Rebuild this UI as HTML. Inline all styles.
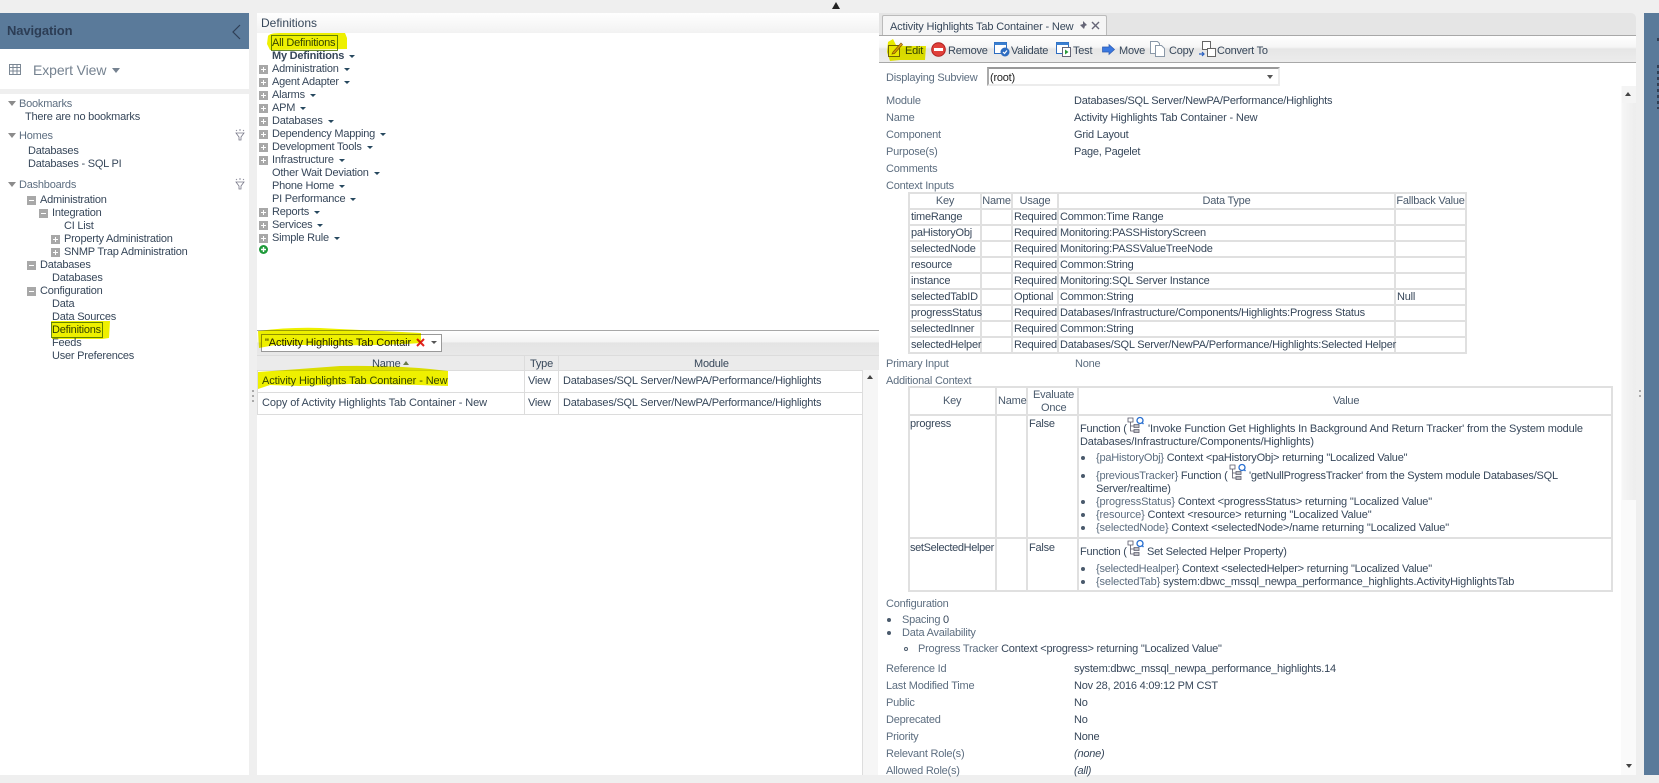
<!DOCTYPE html>
<html><head><meta charset="utf-8"><style>
html,body{margin:0;padding:0}
body{width:1659px;height:783px;position:relative;overflow:hidden;background:#efefef;font:11px "Liberation Sans",sans-serif;color:#37475a;letter-spacing:-.22px}
.r{position:absolute}
.t{position:absolute;white-space:nowrap;line-height:14px;height:14px;margin-top:1px}
.w .t{margin-top:0}
.s{letter-spacing:-.1px}
.m{letter-spacing:-.15px}
.l{color:#5d6e80}
.c{display:inline-block;width:0;height:0;border-left:3px solid transparent;border-right:3px solid transparent;border-top:3px solid #27485f;margin-left:5px;vertical-align:1px}
.b{position:absolute;width:9px;height:9px;background:#a8a8a8;margin-top:1px}
.b:before{content:"";position:absolute;left:2px;top:4px;width:5px;height:1px;background:#fff}
.p:after{content:"";position:absolute;left:4px;top:2px;width:1px;height:5px;background:#fff}
.tri{position:absolute;width:0;height:0;border-left:4px solid transparent;border-right:4px solid transparent;border-top:5px solid #8b8b8b;margin-top:1px}
table{position:absolute;border-collapse:collapse;table-layout:fixed;font:11px "Liberation Sans",sans-serif;color:#37475a}
td,th{border:2px solid #e0e0e0;padding:0 0 0 1px;white-space:nowrap;font-weight:normal;overflow:visible;line-height:13px}
th{color:#4a5a6c;text-align:center;padding:0}
.bu{position:absolute;width:4px;height:4px;border-radius:50%;background:#4a5a6c}
.k{color:#5d6e80}
svg{position:absolute;overflow:visible}
</style></head><body>

<!-- top arrow -->
<div class="r" style="left:832px;top:2px;width:0;height:0;border-left:4px solid transparent;border-right:4px solid transparent;border-bottom:7px solid #222"></div>

<!-- left panel -->
<div class="r" style="left:0;top:13px;width:249px;height:36px;background:#5a7a9a"></div>
<div class="t" style="left:7px;top:23px;font-size:13px;font-weight:bold;color:#2c3d55;letter-spacing:-.1px">Navigation</div>
<svg style="left:231px;top:24px" width="12" height="16"><path d="M9 1L2 8L9 15" fill="none" stroke="#2f3f55" stroke-width="1.2"/></svg>
<div class="r" style="left:0;top:49px;width:249px;height:40px;background:#fff"></div>
<svg style="left:9px;top:64px" width="12" height="11"><path d="M.5.5h11v10H.5zM.5 3.500h11M.5 7h11M4 .5v10M8 .5v10" fill="none" stroke="#7b8794"/></svg>
<div class="t" style="left:33px;top:62px;font-size:14px;line-height:15px;color:#758290;letter-spacing:-.1px">Expert View</div>
<div class="tri" style="left:112px;top:67px;border-top-color:#758290"></div>
<div class="r" style="left:0;top:94px;width:249px;height:681px;background:#fff"></div>

<div class="tri" style="left:8px;top:100px"></div><div class="t l" style="left:19px;top:96px">Bookmarks</div>
<div class="t" style="left:25px;top:109px">There are no bookmarks</div>
<div class="tri" style="left:8px;top:132px"></div><div class="t l" style="left:19px;top:128px">Homes</div>
<div class="t" style="left:28px;top:143px">Databases</div>
<div class="t" style="left:28px;top:156px">Databases - SQL PI</div>
<div class="tri" style="left:8px;top:181px"></div><div class="t l" style="left:19px;top:177px">Dashboards</div>
<svg style="left:235px;top:129px" width="10" height="12"><path d="M1 4h8L6 8v3H4V8zM1 1l1 1M5 0v2M9 1L8 2" fill="none" stroke="#778" stroke-width=".8"/></svg>
<svg style="left:235px;top:178px" width="10" height="12"><path d="M1 4h8L6 8v3H4V8zM1 1l1 1M5 0v2M9 1L8 2" fill="none" stroke="#778" stroke-width=".8"/></svg>
<div class="b" style="left:27px;top:195px"></div><div class="t" style="left:40px;top:192px">Administration</div>
<div class="b" style="left:39px;top:208px"></div><div class="t" style="left:52px;top:205px">Integration</div>
<div class="t" style="left:64px;top:218px">CI List</div>
<div class="b p" style="left:51px;top:234px"></div><div class="t" style="left:64px;top:231px">Property Administration</div>
<div class="b p" style="left:51px;top:247px"></div><div class="t" style="left:64px;top:244px">SNMP Trap Administration</div>
<div class="b" style="left:27px;top:260px"></div><div class="t" style="left:40px;top:257px">Databases</div>
<div class="t" style="left:52px;top:270px">Databases</div>
<div class="b" style="left:27px;top:286px"></div><div class="t" style="left:40px;top:283px">Configuration</div>
<div class="t" style="left:52px;top:296px">Data</div>
<div class="t" style="left:52px;top:309px">Data Sources</div>
<div class="r" style="left:51px;top:322px;width:50px;height:14px;border:1px solid #6a8a30"></div>
<div class="t" style="left:52px;top:322px">Definitions</div>
<div class="t" style="left:52px;top:335px">Feeds</div>
<div class="t" style="left:52px;top:348px">User Preferences</div>

<!-- middle panel -->
<div class="r" style="left:257px;top:13px;width:622px;height:20px;background:linear-gradient(#fff,#f2f2f2)"></div>
<div class="t" style="left:261px;top:15px;font-size:12px;letter-spacing:0">Definitions</div>
<div class="r" style="left:257px;top:33px;width:622px;height:742px;background:#fff"></div>

<div class="r" style="left:271px;top:35px;width:65px;height:14px;border:1px solid #6a8a30"></div>
<div class="t" style="left:272px;top:35px">All Definitions</div>
<div class="t" style="left:272px;top:48px;font-weight:bold">My Definitions<i class="c"></i></div>
<div class="b p" style="left:259px;top:64px"></div><div class="t" style="left:272px;top:61px">Administration<i class="c"></i></div>
<div class="b p" style="left:259px;top:77px"></div><div class="t" style="left:272px;top:74px">Agent Adapter<i class="c"></i></div>
<div class="b p" style="left:259px;top:90px"></div><div class="t" style="left:272px;top:87px">Alarms<i class="c"></i></div>
<div class="b p" style="left:259px;top:103px"></div><div class="t" style="left:272px;top:100px">APM<i class="c"></i></div>
<div class="b p" style="left:259px;top:116px"></div><div class="t" style="left:272px;top:113px">Databases<i class="c"></i></div>
<div class="b p" style="left:259px;top:129px"></div><div class="t" style="left:272px;top:126px">Dependency Mapping<i class="c"></i></div>
<div class="b p" style="left:259px;top:142px"></div><div class="t" style="left:272px;top:139px">Development Tools<i class="c"></i></div>
<div class="b p" style="left:259px;top:155px"></div><div class="t" style="left:272px;top:152px">Infrastructure<i class="c"></i></div>
<div class="t" style="left:272px;top:165px">Other Wait Deviation<i class="c"></i></div>
<div class="t" style="left:272px;top:178px">Phone Home<i class="c"></i></div>
<div class="t" style="left:272px;top:191px">PI Performance<i class="c"></i></div>
<div class="b p" style="left:259px;top:207px"></div><div class="t" style="left:272px;top:204px">Reports<i class="c"></i></div>
<div class="b p" style="left:259px;top:220px"></div><div class="t" style="left:272px;top:217px">Services<i class="c"></i></div>
<div class="b p" style="left:259px;top:233px"></div><div class="t" style="left:272px;top:230px">Simple Rule<i class="c"></i></div>
<svg style="left:259px;top:245px" width="9" height="9"><circle cx="4.5" cy="4.5" r="4.5" fill="#1f9a3a"/><path d="M4.5 2v5M2 4.5h5" stroke="#fff" stroke-width="1.4"/></svg>

<div class="r" style="left:257px;top:330px;width:622px;height:1px;background:#a8a8a8"></div>
<div class="r" style="left:257px;top:331px;width:622px;height:24px;background:linear-gradient(#fff 0,#f4f4f4 45%,#e4e4e4 50%,#e8e8e8 100%)"></div>
<div class="r" style="left:261px;top:334px;width:179px;height:16px;background:#fff;border:1px solid #999"></div>
<div class="t s" style="left:265px;top:335px;color:#222">"Activity Highlights Tab Contair</div>
<svg style="left:416px;top:338px" width="9" height="9"><path d="M1 1L8 8M8 1L1 8" stroke="#e0231c" stroke-width="2"/></svg>
<div class="r" style="left:431px;top:341px;width:0;height:0;border-left:3px solid transparent;border-right:3px solid transparent;border-top:3px solid #555"></div>

<div class="r" style="left:257px;top:355px;width:622px;height:15px;background:#ebebeb;border-top:1px solid #dcdcdc;box-sizing:border-box"></div>
<div class="r" style="left:524px;top:355px;width:1px;height:60px;background:#dcdcdc"></div>
<div class="r" style="left:558px;top:355px;width:1px;height:60px;background:#dcdcdc"></div>
<div class="t" style="left:372px;top:356px">Name</div>
<div class="r" style="left:403px;top:361px;width:0;height:0;border-left:3.5px solid transparent;border-right:3.5px solid transparent;border-bottom:4px solid #6a7a4a"></div>
<div class="t" style="left:530px;top:356px">Type</div>
<div class="t" style="left:694px;top:356px">Module</div>
<div class="r" style="left:257px;top:370px;width:605px;height:1px;background:#dcdcdc"></div>
<div class="r" style="left:257px;top:392px;width:605px;height:1px;background:#dcdcdc"></div>
<div class="r" style="left:257px;top:414px;width:605px;height:1px;background:#dcdcdc"></div>
<div class="r" style="left:257px;top:370px;width:1px;height:45px;background:#dcdcdc"></div>
<div class="t s" style="left:262px;top:373px">Activity Highlights Tab Container - New</div>
<div class="t" style="left:528px;top:373px">View</div>
<div class="t" style="left:563px;top:373px">Databases/SQL Server/NewPA/Performance/Highlights</div>
<div class="t s" style="left:262px;top:395px">Copy of Activity Highlights Tab Container - New</div>
<div class="t" style="left:528px;top:395px">View</div>
<div class="t" style="left:563px;top:395px">Databases/SQL Server/NewPA/Performance/Highlights</div>
<div class="r" style="left:862px;top:370px;width:16px;height:405px;background:#f6f6f6;border-left:1px solid #ddd;box-sizing:border-box"></div>
<div class="r" style="left:867px;top:375px;width:0;height:0;border-left:3px solid transparent;border-right:3px solid transparent;border-bottom:4px solid #444"></div>
<div class="r" style="left:252px;top:390px;width:2px;height:2px;background:#aaa"></div>
<div class="r" style="left:252px;top:395px;width:2px;height:2px;background:#aaa"></div>
<div class="r" style="left:252px;top:400px;width:2px;height:2px;background:#aaa"></div>

<!-- right panel -->
<div class="r" style="left:879px;top:13px;width:757px;height:22px;background:#e5e5e5;border-radius:0 5px 0 0"></div>
<div class="r" style="left:882px;top:15px;width:225px;height:21px;background:#f5f5f5;border:1px solid #bbb;border-bottom:none;box-sizing:border-box;border-radius:2px 2px 0 0"></div>
<div class="t m" style="left:890px;top:19px">Activity Highlights Tab Container - New</div>
<svg style="left:1078px;top:21px" width="10" height="10"><path d="M5 0l4 4-2 1-1 3-2-2-3 3 3-3-2-2 3-1z" fill="#667"/></svg>
<svg style="left:1091px;top:21px" width="10" height="10"><path d="M1 1L8 8M8 1L1 8" stroke="#667" stroke-width="1.4"/></svg>
<div class="r" style="left:879px;top:35px;width:757px;height:1px;background:#a8a8a8"></div>
<div class="r" style="left:879px;top:36px;width:757px;height:26px;background:linear-gradient(#fff 0,#f6f6f6 42%,#e6e6e6 50%,#ececec 100%)"></div>
<div class="r" style="left:879px;top:62px;width:757px;height:1px;background:#a8a8a8"></div>
<div class="r" style="left:879px;top:63px;width:757px;height:712px;background:#fff"></div>

<svg style="left:888px;top:42px" width="15" height="15"><rect x=".5" y="3.500" width="11" height="11" fill="#fbf5c0" stroke="#7a6a20"/><path d="M5 10L13 1l1.500 1.500L6.500 11.500 4 12z" fill="#e8a520" stroke="#8a5a10" stroke-width=".7"/></svg>
<div class="t" style="left:905px;top:43px">Edit</div>
<svg style="left:931px;top:42px" width="15" height="15"><circle cx="7.5" cy="7.5" r="6.8" fill="#e0403a" stroke="#b02020"/><rect x="3" y="6" width="9" height="3" fill="#fff"/></svg>
<div class="t" style="left:948px;top:43px">Remove</div>
<svg style="left:994px;top:42px" width="16" height="15"><rect x=".5" y=".5" width="12" height="11" fill="#fff" stroke="#2d6cc0"/><rect x=".5" y=".5" width="12" height="2.5" fill="#3a7fd0"/><circle cx="11" cy="10" r="4.5" fill="#2d6cc0"/><path d="M9 10l1.500 1.500L13 8.500" fill="none" stroke="#fff" stroke-width="1.2"/></svg>
<div class="t" style="left:1011px;top:43px">Validate</div>
<svg style="left:1056px;top:42px" width="15" height="15"><rect x=".5" y=".5" width="12" height="11" fill="#fff" stroke="#2d6cc0"/><rect x=".5" y=".5" width="12" height="2.5" fill="#3a7fd0"/><rect x="6.500" y="5.500" width="8" height="9" fill="#fff" stroke="#667"/><path d="M9 7.500l3.500 2.500L9 12.500z" fill="#2a9a3a"/></svg>
<div class="t" style="left:1073px;top:43px">Test</div>
<svg style="left:1102px;top:44px" width="13" height="11"><path d="M.5 3h6.500V.5L12.500 5.500 7 10.500V8H.5z" fill="#3a78e0" stroke="#2a58b0" stroke-width=".7"/></svg>
<div class="t" style="left:1119px;top:43px">Move</div>
<svg style="left:1150px;top:41px" width="16" height="16"><path d="M.5.5h7l2 2v10h-9z" fill="#fff" stroke="#8a98a8"/><path d="M5.500 4.500h6l3 3v8h-9z" fill="#fff" stroke="#8a98a8"/></svg>
<div class="t" style="left:1169px;top:43px">Copy</div>
<svg style="left:1199px;top:41px" width="17" height="16"><rect x="3.500" y=".5" width="8" height="8" fill="#fff" stroke="#666"/><rect x="8.500" y="7.500" width="8" height="8" fill="#fff" stroke="#666"/><path d="M0 13h5M3 11l2 2-2 2" fill="none" stroke="#2a60c0" stroke-width="1.2"/></svg>
<div class="t" style="left:1217px;top:43px">Convert To</div>

<div class="t l" style="left:886px;top:70px">Displaying Subview</div>
<div class="r" style="left:987px;top:67px;width:293px;height:19px;box-sizing:border-box;border:2px solid #ececec;border-top:2px solid #999;border-left:2px solid #aaa;background:#fff"></div>
<div class="t" style="left:990px;top:70px;color:#222">(root)</div>
<div class="r" style="left:1267px;top:75px;width:0;height:0;border-left:3.5px solid transparent;border-right:3.5px solid transparent;border-top:4px solid #555"></div>

<div class="t l" style="left:886px;top:93px">Module</div><div class="t" style="left:1074px;top:93px">Databases/SQL Server/NewPA/Performance/Highlights</div>
<div class="t l" style="left:886px;top:110px">Name</div><div class="t m" style="left:1074px;top:110px">Activity Highlights Tab Container - New</div>
<div class="t l" style="left:886px;top:127px">Component</div><div class="t" style="left:1074px;top:127px">Grid Layout</div>
<div class="t l" style="left:886px;top:144px">Purpose(s)</div><div class="t" style="left:1074px;top:144px">Page, Pagelet</div>
<div class="t l" style="left:886px;top:161px">Comments</div>
<div class="t l" style="left:886px;top:178px">Context Inputs</div>

<table style="left:908px;top:192px;width:557px;height:160px">
<colgroup><col style="width:72px"><col style="width:31px"><col style="width:46px"><col style="width:337px"><col style="width:71px"></colgroup>
<tr style="height:16px"><th>Key</th><th>Name</th><th>Usage</th><th>Data Type</th><th>Fallback Value</th></tr>
<tr style="height:16px"><td>timeRange</td><td></td><td>Required</td><td>Common:Time Range</td><td></td></tr>
<tr style="height:16px"><td>paHistoryObj</td><td></td><td>Required</td><td>Monitoring:PASSHistoryScreen</td><td></td></tr>
<tr style="height:16px"><td>selectedNode</td><td></td><td>Required</td><td>Monitoring:PASSValueTreeNode</td><td></td></tr>
<tr style="height:16px"><td>resource</td><td></td><td>Required</td><td>Common:String</td><td></td></tr>
<tr style="height:16px"><td>instance</td><td></td><td>Required</td><td>Monitoring:SQL Server Instance</td><td></td></tr>
<tr style="height:16px"><td>selectedTabID</td><td></td><td>Optional</td><td>Common:String</td><td>Null</td></tr>
<tr style="height:16px"><td>progressStatus</td><td></td><td>Required</td><td>Databases/Infrastructure/Components/Highlights:Progress Status</td><td></td></tr>
<tr style="height:16px"><td>selectedInner</td><td></td><td>Required</td><td>Common:String</td><td></td></tr>
<tr style="height:16px"><td>selectedHelper</td><td></td><td>Required</td><td>Databases/SQL Server/NewPA/Performance/Highlights:Selected Helper</td><td></td></tr>
</table>

<div class="t l" style="left:886px;top:356px">Primary Input</div><div class="t l" style="left:1075px;top:356px">None</div>
<div class="t l" style="left:886px;top:373px">Additional Context</div>

<div class="r" style="left:908px;top:386px;width:705px;height:206px;box-sizing:border-box;border:2px solid #e0e0e0"></div>
<div class="r" style="left:908px;top:414px;width:705px;height:2px;background:#e0e0e0"></div>
<div class="r" style="left:908px;top:537px;width:705px;height:2px;background:#e0e0e0"></div>
<div class="r" style="left:995px;top:386px;width:2px;height:206px;background:#e0e0e0"></div>
<div class="r" style="left:1026px;top:386px;width:2px;height:206px;background:#e0e0e0"></div>
<div class="r" style="left:1077px;top:386px;width:2px;height:206px;background:#e0e0e0"></div>
<div class="w">
<div class="t" style="left:943px;top:394px;color:#4a5a6c">Key</div>
<div class="t" style="left:998px;top:394px;color:#4a5a6c">Name</div>
<div class="t" style="left:1033px;top:388px;color:#4a5a6c">Evaluate</div>
<div class="t" style="left:1041px;top:401px;color:#4a5a6c">Once</div>
<div class="t" style="left:1333px;top:394px;color:#4a5a6c">Value</div>

<div class="t" style="left:910px;top:417px">progress</div>
<div class="t" style="left:1029px;top:417px">False</div>
<div class="t" style="left:1080px;top:422px">Function (</div>
<svg style="left:1127px;top:417px" width="17" height="16"><path d="M1 5h5V1H1zM3.500 5v9h8M3.500 9h8M7 7.500h5v3H7zM7 12.500h5v3H7z" fill="#fff" stroke="#556" stroke-width=".8"/><circle cx="13" cy="3.500" r="3" fill="none" stroke="#2a70d0" stroke-width="1.300"/><path d="M15 5.500l1.500 1.500" stroke="#2a70d0" stroke-width="1.300"/></svg>
<div class="t m" style="left:1148px;top:422px">'Invoke Function Get Highlights In Background And Return Tracker' from the System module</div>
<div class="t m" style="left:1080px;top:435px">Databases/Infrastructure/Components/Highlights)</div>
<div class="bu" style="left:1081px;top:456px"></div>
<div class="t" style="left:1096px;top:451px"><span class="k">{paHistoryObj}</span> Context &lt;paHistoryObj&gt; returning "Localized Value"</div>
<div class="bu" style="left:1081px;top:474px"></div>
<div class="t" style="left:1096px;top:469px"><span class="k">{previousTracker}</span> Function (</div>
<svg style="left:1229px;top:464px" width="17" height="16"><path d="M1 5h5V1H1zM3.500 5v9h8M3.500 9h8M7 7.500h5v3H7zM7 12.500h5v3H7z" fill="#fff" stroke="#556" stroke-width=".8"/><circle cx="13" cy="3.500" r="3" fill="none" stroke="#2a70d0" stroke-width="1.300"/><path d="M15 5.500l1.500 1.500" stroke="#2a70d0" stroke-width="1.300"/></svg>
<div class="t" style="left:1249px;top:469px">'getNullProgressTracker' from the System module Databases/SQL</div>
<div class="t" style="left:1096px;top:482px">Server/realtime)</div>
<div class="bu" style="left:1081px;top:500px"></div>
<div class="t m" style="left:1096px;top:495px"><span class="k">{progressStatus}</span> Context &lt;progressStatus&gt; returning "Localized Value"</div>
<div class="bu" style="left:1081px;top:513px"></div>
<div class="t m" style="left:1096px;top:508px"><span class="k">{resource}</span> Context &lt;resource&gt; returning "Localized Value"</div>
<div class="bu" style="left:1081px;top:526px"></div>
<div class="t m" style="left:1096px;top:521px"><span class="k">{selectedNode}</span> Context &lt;selectedNode&gt;/name returning "Localized Value"</div>

<div class="t" style="left:910px;top:541px;letter-spacing:-.35px">setSelectedHelper</div>
<div class="t" style="left:1029px;top:541px">False</div>
<div class="t" style="left:1080px;top:545px">Function (</div>
<svg style="left:1127px;top:540px" width="17" height="16"><path d="M1 5h5V1H1zM3.500 5v9h8M3.500 9h8M7 7.500h5v3H7zM7 12.500h5v3H7z" fill="#fff" stroke="#556" stroke-width=".8"/><circle cx="13" cy="3.500" r="3" fill="none" stroke="#2a70d0" stroke-width="1.300"/><path d="M15 5.500l1.500 1.500" stroke="#2a70d0" stroke-width="1.300"/></svg>
<div class="t" style="left:1147px;top:545px">Set Selected Helper Property)</div>
<div class="bu" style="left:1081px;top:567px"></div>
<div class="t" style="left:1096px;top:562px"><span class="k">{selectedHealper}</span> Context &lt;selectedHelper&gt; returning "Localized Value"</div>
<div class="bu" style="left:1081px;top:580px"></div>
<div class="t m" style="left:1096px;top:575px"><span class="k">{selectedTab}</span> system:dbwc_mssql_newpa_performance_highlights.ActivityHighlightsTab</div>
</div>

<div class="t l" style="left:886px;top:596px">Configuration</div>
<div class="bu" style="left:887px;top:618px"></div>
<div class="t" style="left:902px;top:612px"><span class="k">Spacing</span> 0</div>
<div class="bu" style="left:887px;top:631px"></div>
<div class="t l" style="left:902px;top:625px">Data Availability</div>
<div class="bu" style="left:904px;top:647px;background:#fff;border:1px solid #4a5a6c;box-sizing:border-box"></div>
<div class="t" style="left:918px;top:641px"><span class="k">Progress Tracker</span> Context &lt;progress&gt; returning "Localized Value"</div>

<div class="t l" style="left:886px;top:661px">Reference Id</div><div class="t" style="left:1074px;top:661px">system:dbwc_mssql_newpa_performance_highlights.14</div>
<div class="t l" style="left:886px;top:678px">Last Modified Time</div><div class="t" style="left:1074px;top:678px">Nov 28, 2016 4:09:12 PM CST</div>
<div class="t l" style="left:886px;top:695px">Public</div><div class="t" style="left:1074px;top:695px">No</div>
<div class="t l" style="left:886px;top:712px">Deprecated</div><div class="t" style="left:1074px;top:712px">No</div>
<div class="t l" style="left:886px;top:729px">Priority</div><div class="t" style="left:1074px;top:729px">None</div>
<div class="t l" style="left:886px;top:746px">Relevant Role(s)</div><div class="t" style="left:1074px;top:746px;font-style:italic">(none)</div>
<div class="t l" style="left:886px;top:763px">Allowed Role(s)</div><div class="t" style="left:1074px;top:763px;font-style:italic">(all)</div>

<!-- right scrollbar -->
<div class="r" style="left:1621px;top:86px;width:15px;height:689px;background:#fafafa"></div>
<div class="r" style="left:1622px;top:103px;width:14px;height:397px;background:linear-gradient(90deg,#f6f6f6,#ededed)"></div>
<div class="r" style="left:1622px;top:86px;width:14px;height:17px;background:#f4f4f4"></div>
<div class="r" style="left:1625px;top:92px;width:0;height:0;border-left:3.5px solid transparent;border-right:3.5px solid transparent;border-bottom:4px solid #444"></div>
<div class="r" style="left:1626px;top:764px;width:0;height:0;border-left:3px solid transparent;border-right:3px solid transparent;border-top:4px solid #444"></div>
<div class="r" style="left:1639px;top:390px;width:2px;height:2px;background:#aaa"></div>
<div class="r" style="left:1639px;top:395px;width:2px;height:2px;background:#aaa"></div>

<!-- far right bar -->
<div class="r" style="left:1644px;top:13px;width:15px;height:762px;background:#5a7a9a"></div>
<div class="r" style="left:1657px;top:38px;width:2px;height:3px;background:#2f3f55"></div>
<div class="r" style="left:1657px;top:65px;width:2px;height:44px;background:repeating-linear-gradient(#2f3f55 0 3px,transparent 3px 6px)"></div>

<!-- yellow marker strokes -->
<svg style="left:0;top:0;mix-blend-mode:multiply" width="1659" height="783">
<g fill="#eef000">
<path d="M51 321H110L109 338L102 339H52Z"/>
<path d="M268 36Q270 33 280 33H345L347 38V49L270 50L267 44Z"/>
<path d="M258 331Q290 327 320 328Q380 331 421 333V343Q380 346 330 345H275L259 348Z"/>
<path d="M258 372Q300 369 340 366Q400 365 448 371V386Q400 384 350 384L300 386L270 385L258 389Z"/>
<path d="M888 42L893 39L896 45L905 46L926 46L925 60L900 60L890 61L887 52Z"/>
</g></svg>
</body></html>
